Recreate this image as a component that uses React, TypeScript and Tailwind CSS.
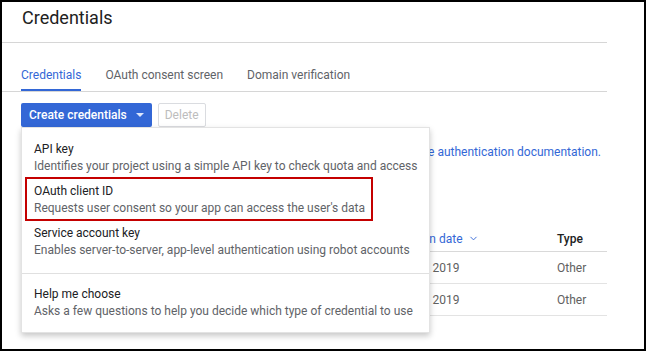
import React from 'react';
import { ChevronDown } from 'lucide-react';

interface MenuItem {
  title: string;
  description: string;
}

const items: MenuItem[] = [
  { title: 'API key', description: 'Identifies your project using a simple API key to check quota and access' },
  { title: 'OAuth client ID', description: "Requests user consent so your app can access the user's data" },
  { title: 'Service account key', description: 'Enables server-to-server, app-level authentication using robot accounts' },
];

const rows = [
  { name: 'Web client 1', date: 'Jan 10, 2019', type: 'Other' },
  { name: 'Desktop client', date: 'Jan 14, 2019', type: 'Other' },
];

const Item = ({ title, description }: MenuItem) => (
  <div className="px-3 py-1 cursor-pointer whitespace-nowrap">
    <div className="text-[12px] leading-[17px] text-[#202124]">{title}</div>
    <div className="text-[12px] leading-[17px] text-[#5f6368]">{description}</div>
  </div>
);

const CreateMenu = () => (
  <div className="absolute left-0 top-full z-10 w-[409px] bg-white border border-[#e3e3e3] shadow-[0_3px_6px_rgba(0,0,0,0.22)]">
    <div className="relative pt-[9px] pb-[10px]">
      {items.map((it) => (
        <Item key={it.title} {...it} />
      ))}
      {/* annotation highlight */}
      <div className="absolute left-[3px] top-[49px] w-[348px] h-[44px] border-2 border-[#c40000] pointer-events-none" />
    </div>
    <div className="border-t border-[#e0e0e0] pt-[8px] pb-[8px]">
      <Item title="Help me choose" description="Asks a few questions to help you decide which type of credential to use" />
    </div>
  </div>
);

export default function App() {
  const tabs = ['Credentials', 'OAuth consent screen', 'Domain verification'];

  return (
    <div className="relative w-[646px] h-[351px] overflow-hidden bg-white border-2 border-black font-['Roboto','Liberation_Sans',sans-serif]">
      <div className="w-[605px]">
        <div className="h-[41px] border-b border-[#d6d6d6] pl-[20px] pt-[4px]">
          <h1 className="text-[18px] leading-[24px] text-[#212121]">Credentials</h1>
        </div>

        <div className="flex gap-6 pl-[19px] border-b border-[#d6d6d6]">
          {tabs.map((t, i) => (
            <div
              key={t}
              className={
                i === 0
                  ? 'pt-[24px] pb-[6px] border-b-2 border-[#3367d6] text-[12px] leading-[16px] text-[#3367d6]'
                  : 'pt-[24px] pb-[6px] border-b-2 border-transparent text-[12px] leading-[16px] text-[#5f6368]'
              }
            >
              {t}
            </div>
          ))}
        </div>

        <div className="pl-[19px]">
          <div className="relative mt-[11px] flex gap-[6px]">
            <button className="flex h-[24px] items-center gap-[9px] rounded-[2px] bg-[#3367d6] pl-[8px] pr-[8px] text-[12px] font-medium text-white">
              Create credentials
              <svg width="8" height="4" viewBox="0 0 8 4">
                <path d="M0 0 L8 0 L4 4 Z" fill="#dfe7fb" />
              </svg>
            </button>
            <button className="h-[24px] rounded-[2px] border border-[#dadce0] px-[6px] text-[12px] text-[#bdbdbd]">
              Delete
            </button>
            <CreateMenu />
          </div>

          <p className="mt-[17px] pr-[6px] text-right text-[12px] leading-[16px] text-[#5f6368] whitespace-nowrap">
            For more information, <span className="text-[#3367d6]">see the authentication documentation.</span>
          </p>

          <div className="mt-[66px] text-[12px] whitespace-nowrap">
            <div className="flex h-[26px] items-center border-b border-[#d9d9d9]">
              <div className="w-[370px] font-medium text-[#212121]">Name</div>
              <div className="flex w-[166px] items-center gap-[5px] text-[#3367d6]">
                Creation date
                <ChevronDown size={11} strokeWidth={2} />
              </div>
              <div className="w-[50px] font-medium text-[#212121]">Type</div>
            </div>
            {rows.map((r) => (
              <div key={r.name} className="flex h-[32px] items-center border-b border-[#e3e3e3] text-[#616161]">
                <div className="w-[370px] text-[#3367d6]">{r.name}</div>
                <div className="w-[166px]">{r.date}</div>
                <div className="w-[50px]">{r.type}</div>
              </div>
            ))}
          </div>
        </div>
      </div>
    </div>
  );
}
